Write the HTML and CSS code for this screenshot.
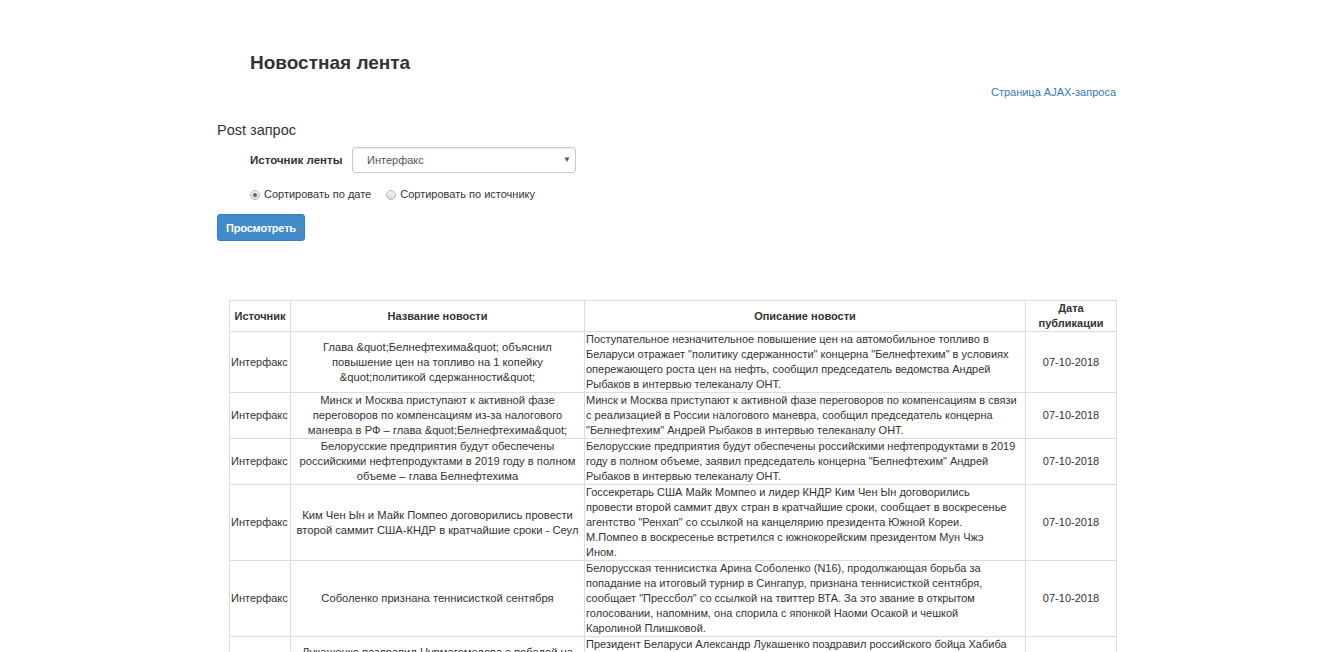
FILE: index.html
```html
<!DOCTYPE html>
<html lang="ru">
<head>
<meta charset="utf-8">
<title>Новостная лента</title>
<link rel="stylesheet" href="styles.css">
</head>
<body>
<div class="container">
  <h1 class="title">Новостная лента</h1>
  <div class="link-row"><a href="#" class="ajax-link">Страница AJAX-запроса</a></div>
  <h3 class="section">Post запрос</h3>
  <form class="form">
    <div class="field">
      <label class="field-label">Источник ленты</label>
      <div class="select-wrap">
        <select class="select">
          <option>Интерфакс</option>
        </select>
        <span class="select-arrow">▼</span>
      </div>
    </div>
    <div class="radios">
      <label class="radio"><input type="radio" name="sort" checked><span>Сортировать по дате</span></label>
      <label class="radio"><input type="radio" name="sort"><span>Сортировать по источнику</span></label>
    </div>
    <button type="button" class="btn">Просмотреть</button>
  </form>

  <table class="news">
    <colgroup>
      <col class="c-src"><col class="c-name"><col class="c-desc"><col class="c-date">
    </colgroup>
    <thead>
      <tr><th>Источник</th><th>Название новости</th><th>Описание новости</th><th>Дата публикации</th></tr>
    </thead>
    <tbody>
      <tr>
        <td class="src">Интерфакс</td>
        <td class="name">Глава &amp;quot;Белнефтехима&amp;quot; объяснил<br>повышение цен на топливо на 1 копейку<br>&amp;quot;политикой сдержанности&amp;quot;</td>
        <td class="desc">Поступательное незначительное повышение цен на автомобильное топливо в<br>Беларуси отражает "политику сдержанности" концерна "Белнефтехим" в условиях<br>опережающего роста цен на нефть, сообщил председатель ведомства Андрей<br>Рыбаков в интервью телеканалу ОНТ.</td>
        <td class="date">07-10-2018</td>
      </tr>
      <tr>
        <td class="src">Интерфакс</td>
        <td class="name">Минск и Москва приступают к активной фазе<br>переговоров по компенсациям из-за налогового<br>маневра в РФ – глава &amp;quot;Белнефтехима&amp;quot;</td>
        <td class="desc">Минск и Москва приступают к активной фазе переговоров по компенсациям в связи<br>с реализацией в России налогового маневра, сообщил председатель концерна<br>"Белнефтехим" Андрей Рыбаков в интервью телеканалу ОНТ.</td>
        <td class="date">07-10-2018</td>
      </tr>
      <tr>
        <td class="src">Интерфакс</td>
        <td class="name">Белорусские предприятия будут обеспечены<br>российскими нефтепродуктами в 2019 году в полном<br>объеме – глава Белнефтехима</td>
        <td class="desc">Белорусские предприятия будут обеспечены российскими нефтепродуктами в 2019<br>году в полном объеме, заявил председатель концерна "Белнефтехим" Андрей<br>Рыбаков в интервью телеканалу ОНТ.</td>
        <td class="date">07-10-2018</td>
      </tr>
      <tr>
        <td class="src">Интерфакс</td>
        <td class="name">Ким Чен Ын и Майк Помпео договорились провести<br>второй саммит США-КНДР в кратчайшие сроки - Сеул</td>
        <td class="desc">Госсекретарь США Майк Момпео и лидер КНДР Ким Чен Ын договорились<br>провести второй саммит двух стран в кратчайшие сроки, сообщает в воскресенье<br>агентство "Ренхап" со ссылкой на канцелярию президента Южной Кореи.<br>М.Помпео в воскресенье встретился с южнокорейским президентом Мун Чжэ<br>Ином.</td>
        <td class="date">07-10-2018</td>
      </tr>
      <tr>
        <td class="src">Интерфакс</td>
        <td class="name">Соболенко признана теннисисткой сентября</td>
        <td class="desc">Белорусская теннисистка Арина Соболенко (N16), продолжающая борьба за<br>попадание на итоговый турнир в Сингапур, признана теннисисткой сентября,<br>сообщает "Прессбол" со ссылкой на твиттер ВТА. За это звание в открытом<br>голосовании, напомним, она спорила с японкой Наоми Осакой и чешкой<br>Каролиной Плишковой.</td>
        <td class="date">07-10-2018</td>
      </tr>
      <tr>
        <td class="src">Интерфакс</td>
        <td class="name">Лукашенко поздравил Нурмагомедова с победой на<br>турнире UFC</td>
        <td class="desc">Президент Беларуси Александр Лукашенко поздравил российского бойца Хабиба<br>Нурмагомедова с победой над Конором Макгрегором на турнире UFC в<br>Лас-Вегасе, сообщает пресс-служба главы государства.</td>
        <td class="date">07-10-2018</td>
      </tr>
    </tbody>
  </table>
</div>
</body>
</html>
```

FILE: styles.css
```css
* { box-sizing: border-box; }

html, body {
  margin: 0;
  padding: 0;
  background: #fff;
}

body {
  font-family: "Liberation Sans", Arial, sans-serif;
  font-size: 11px;
  line-height: 15px;
  color: #333;
}

.container {
  width: 901px;
  margin: 0 auto;
  padding-top: 52px;
}

.title {
  margin: 0 0 0 33px;
  font-size: 19px;
  line-height: 21px;
  font-weight: bold;
  color: #333;
}

.link-row {
  display: flex;
  justify-content: flex-end;
  margin-top: 12px;
  padding-right: 2px;
}

.ajax-link {
  color: #337ab7;
  text-decoration: none;
  font-size: 11px;
  line-height: 15px;
}

.section {
  margin: 21px 0 0 0;
  font-size: 14.5px;
  line-height: 18px;
  font-weight: normal;
  color: #333;
}

.form {
  margin-top: 8px;
}

.field {
  display: flex;
  align-items: center;
  padding-left: 33px;
}

.field-label {
  font-weight: bold;
  font-size: 11.5px;
  width: 102px;
}

.select-wrap {
  position: relative;
  width: 224px;
  height: 26px;
}

.select {
  -webkit-appearance: none;
  appearance: none;
  width: 100%;
  height: 100%;
  border: 1px solid #ccc;
  border-radius: 3px;
  background: #fff;
  box-shadow: inset 0 1px 1px rgba(0,0,0,.075);
  font-family: "Liberation Sans", Arial, sans-serif;
  font-size: 11px;
  color: #555;
  padding: 0 0 0 14px;
  outline: none;
}

.select-arrow {
  position: absolute;
  right: 5px;
  top: 8px;
  font-size: 8px;
  line-height: 10px;
  color: #555;
  pointer-events: none;
}

.radios {
  display: flex;
  align-items: center;
  gap: 15px;
  padding-left: 33px;
  margin-top: 14px;
  height: 15px;
  font-size: 11px;
}

.radio {
  display: flex;
  align-items: center;
  gap: 4px;
}

.radio input {
  -webkit-appearance: none;
  appearance: none;
  margin: 0;
  width: 10px;
  height: 10px;
  border-radius: 50%;
  border: 1px solid #b8b8b8;
  background: linear-gradient(#f4f4f4, #dcdcdc);
  position: relative;
}

.radio input:checked::after {
  content: "";
  position: absolute;
  left: 2px;
  top: 2px;
  width: 4px;
  height: 4px;
  border-radius: 50%;
  background: #666;
}

.btn {
  display: block;
  margin-top: 12px;
  width: 88px;
  height: 27px;
  border: 1px solid #357ebd;
  border-radius: 3px;
  background: #428bca;
  color: #fff;
  font-family: "Liberation Sans", Arial, sans-serif;
  font-size: 11px;
  font-weight: bold;
  letter-spacing: -0.2px;
  padding: 0;
}

.news {
  margin: 59px 0 0 12px;
  width: 887px;
  border-collapse: collapse;
  table-layout: fixed;
}

.c-src { width: 61px; }
.c-name { width: 294px; }
.c-desc { width: 441px; }
.c-date { width: 91px; }

.news th, .news td {
  border: 1px solid #ddd;
  padding: 0 1px;
  vertical-align: middle;
  font-size: 11px;
  line-height: 15px;
}

.news th {
  font-weight: bold;
  text-align: center;
}

.src { text-align: left; }
.news td.name { text-align: center; font-size: 11.2px; }
.desc { text-align: left; }
.date { text-align: center; }
```
